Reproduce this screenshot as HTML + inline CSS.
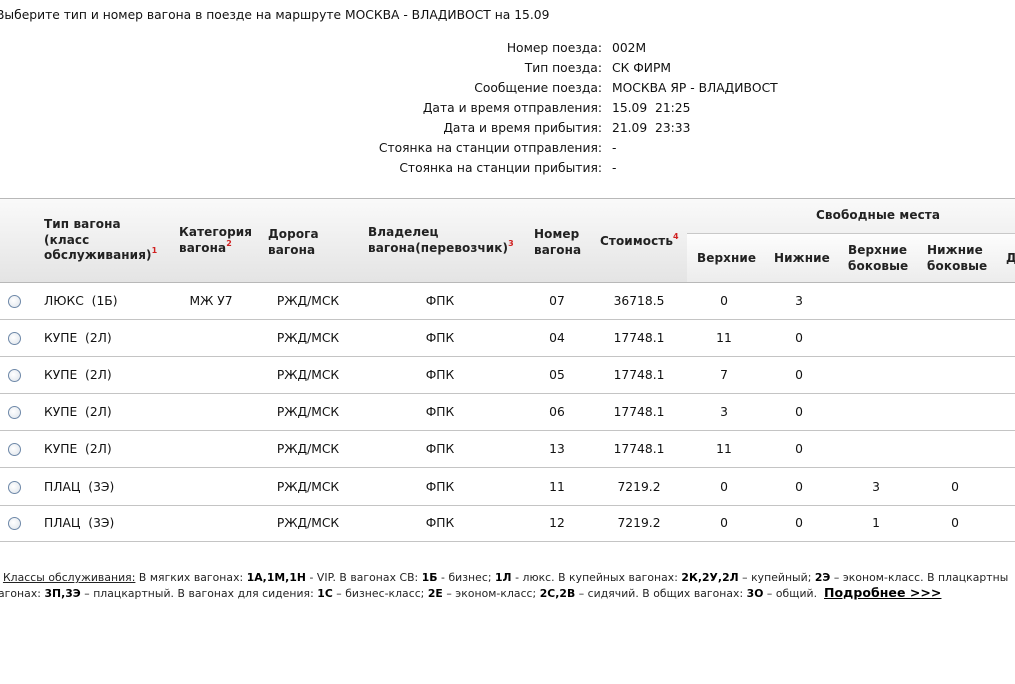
<!DOCTYPE html>
<html><head><meta charset="utf-8"><style>
body{margin:0;width:1015px;height:684px;background:#fff;position:relative;overflow:hidden;font-family:"DejaVu Sans","Liberation Sans",sans-serif;font-size:12.3px;color:#111}
.a{position:absolute;white-space:nowrap;line-height:16px}
.r{text-align:right}
.c{transform:translateX(-50%)}
.h{font-weight:bold;font-size:12px;line-height:15.5px;color:#222;letter-spacing:0.1px}
sup{color:#d02020;font-size:8px;vertical-align:6px;line-height:0}
.ln{position:absolute;left:0;width:1015px;height:1px;background:#c4c4c4}
.rad{position:absolute;left:8px;width:11px;height:11px;border:1px solid #6e88a8;border-radius:50%;background:radial-gradient(circle at 40% 40%,#fff,#dde3ea)}
.f{position:absolute;white-space:nowrap;font-size:10.8px;line-height:14px;color:#222;letter-spacing:0.05px}
.f b{color:#000}
</style></head><body>
<div class="a" style="left:-4px;top:7px">Выберите тип и номер вагона в поезде на маршруте МОСКВА - ВЛАДИВОСТ на 15.09</div>

<div class="a r" style="right:413px;top:40px">Номер поезда:</div><div class="a" style="left:612px;top:40px">002М</div>
<div class="a r" style="right:413px;top:60px">Тип поезда:</div><div class="a" style="left:612px;top:60px">СК ФИРМ</div>
<div class="a r" style="right:413px;top:80px">Сообщение поезда:</div><div class="a" style="left:612px;top:80px">МОСКВА ЯР - ВЛАДИВОСТ</div>
<div class="a r" style="right:413px;top:100px">Дата и время отправления:</div><div class="a" style="left:612px;top:100px">15.09&nbsp; 21:25</div>
<div class="a r" style="right:413px;top:120px">Дата и время прибытия:</div><div class="a" style="left:612px;top:120px">21.09&nbsp; 23:33</div>
<div class="a r" style="right:413px;top:140px">Стоянка на станции отправления:</div><div class="a" style="left:612px;top:140px">-</div>
<div class="a r" style="right:413px;top:160px">Стоянка на станции прибытия:</div><div class="a" style="left:612px;top:160px">-</div>

<div style="position:absolute;left:0;top:198px;width:1015px;height:84px;background:linear-gradient(#fafafa,#e4e4e4)"></div>
<div style="position:absolute;left:687px;top:234px;width:328px;height:48px;background:linear-gradient(#fdfdfd,#ececec)"></div>
<div class="ln" style="top:198px;background:#b8b8b8"></div>
<div style="position:absolute;left:687px;top:233px;width:328px;height:1px;background:#c8c8c8"></div>
<div class="ln" style="top:282px;background:#b8b8b8"></div>

<div class="a h" style="left:44px;top:217px">Тип вагона<br>(класс<br>обслуживания)<sup>1</sup></div>
<div class="a h" style="left:179px;top:225px">Категория<br>вагона<sup>2</sup></div>
<div class="a h" style="left:268px;top:227px">Дорога<br>вагона</div>
<div class="a h" style="left:368px;top:225px">Владелец<br>вагона(перевозчик)<sup>3</sup></div>
<div class="a h" style="left:534px;top:227px">Номер<br>вагона</div>
<div class="a h" style="left:600px;top:234px">Стоимость<sup>4</sup></div>
<div class="a h" style="left:816px;top:208px">Свободные места</div>
<div class="a h" style="left:697px;top:251px">Верхние</div>
<div class="a h" style="left:774px;top:251px">Нижние</div>
<div class="a h" style="left:848px;top:243px">Верхние<br>боковые</div>
<div class="a h" style="left:927px;top:243px">Нижние<br>боковые</div>
<div class="a h" style="left:1006px;top:251px">Д</div>

<div class="rad" style="top:295px"></div><div class="a" style="left:44px;top:293px">ЛЮКС&nbsp; (1Б)</div><div class="a c" style="left:211px;top:293px">МЖ У7</div><div class="a c" style="left:308px;top:293px">РЖД/МСК</div><div class="a c" style="left:440px;top:293px">ФПК</div><div class="a c" style="left:557px;top:293px">07</div><div class="a c" style="left:639px;top:293px">36718.5</div><div class="a c" style="left:724px;top:293px">0</div><div class="a c" style="left:799px;top:293px">3</div>
<div class="ln" style="top:319px"></div>
<div class="rad" style="top:332px"></div><div class="a" style="left:44px;top:330px">КУПЕ&nbsp; (2Л)</div><div class="a c" style="left:308px;top:330px">РЖД/МСК</div><div class="a c" style="left:440px;top:330px">ФПК</div><div class="a c" style="left:557px;top:330px">04</div><div class="a c" style="left:639px;top:330px">17748.1</div><div class="a c" style="left:724px;top:330px">11</div><div class="a c" style="left:799px;top:330px">0</div>
<div class="ln" style="top:356px"></div>
<div class="rad" style="top:369px"></div><div class="a" style="left:44px;top:367px">КУПЕ&nbsp; (2Л)</div><div class="a c" style="left:308px;top:367px">РЖД/МСК</div><div class="a c" style="left:440px;top:367px">ФПК</div><div class="a c" style="left:557px;top:367px">05</div><div class="a c" style="left:639px;top:367px">17748.1</div><div class="a c" style="left:724px;top:367px">7</div><div class="a c" style="left:799px;top:367px">0</div>
<div class="ln" style="top:393px"></div>
<div class="rad" style="top:406px"></div><div class="a" style="left:44px;top:404px">КУПЕ&nbsp; (2Л)</div><div class="a c" style="left:308px;top:404px">РЖД/МСК</div><div class="a c" style="left:440px;top:404px">ФПК</div><div class="a c" style="left:557px;top:404px">06</div><div class="a c" style="left:639px;top:404px">17748.1</div><div class="a c" style="left:724px;top:404px">3</div><div class="a c" style="left:799px;top:404px">0</div>
<div class="ln" style="top:430px"></div>
<div class="rad" style="top:443px"></div><div class="a" style="left:44px;top:441px">КУПЕ&nbsp; (2Л)</div><div class="a c" style="left:308px;top:441px">РЖД/МСК</div><div class="a c" style="left:440px;top:441px">ФПК</div><div class="a c" style="left:557px;top:441px">13</div><div class="a c" style="left:639px;top:441px">17748.1</div><div class="a c" style="left:724px;top:441px">11</div><div class="a c" style="left:799px;top:441px">0</div>
<div class="ln" style="top:467px"></div>
<div class="rad" style="top:481px"></div><div class="a" style="left:44px;top:479px">ПЛАЦ&nbsp; (3Э)</div><div class="a c" style="left:308px;top:479px">РЖД/МСК</div><div class="a c" style="left:440px;top:479px">ФПК</div><div class="a c" style="left:557px;top:479px">11</div><div class="a c" style="left:639px;top:479px">7219.2</div><div class="a c" style="left:724px;top:479px">0</div><div class="a c" style="left:799px;top:479px">0</div><div class="a c" style="left:876px;top:479px">3</div><div class="a c" style="left:955px;top:479px">0</div>
<div class="ln" style="top:505px"></div>
<div class="rad" style="top:517px"></div><div class="a" style="left:44px;top:515px">ПЛАЦ&nbsp; (3Э)</div><div class="a c" style="left:308px;top:515px">РЖД/МСК</div><div class="a c" style="left:440px;top:515px">ФПК</div><div class="a c" style="left:557px;top:515px">12</div><div class="a c" style="left:639px;top:515px">7219.2</div><div class="a c" style="left:724px;top:515px">0</div><div class="a c" style="left:799px;top:515px">0</div><div class="a c" style="left:876px;top:515px">1</div><div class="a c" style="left:955px;top:515px">0</div>
<div class="ln" style="top:541px"></div>

<div class="f" style="left:-4px;top:571px">. <u>Классы обслуживания:</u> В мягких вагонах: <b>1А,1М,1Н</b> - VIP. В вагонах СВ: <b>1Б</b> - бизнес; <b>1Л</b> - люкс. В купейных вагонах: <b>2К,2У,2Л</b> – купейный; <b>2Э</b> – эконом-класс. В плацкартны</div>
<div class="f" style="left:-2px;top:586px">агонах: <b>3П,3Э</b> – плацкартный. В вагонах для сидения: <b>1С</b> – бизнес-класс; <b>2Е</b> – эконом-класс; <b>2С,2В</b> – сидячий. В общих вагонах: <b>3О</b> – общий. &nbsp;<b style="font-size:12.5px;text-decoration:underline">Подробнее &gt;&gt;&gt;</b></div>
</body></html>
